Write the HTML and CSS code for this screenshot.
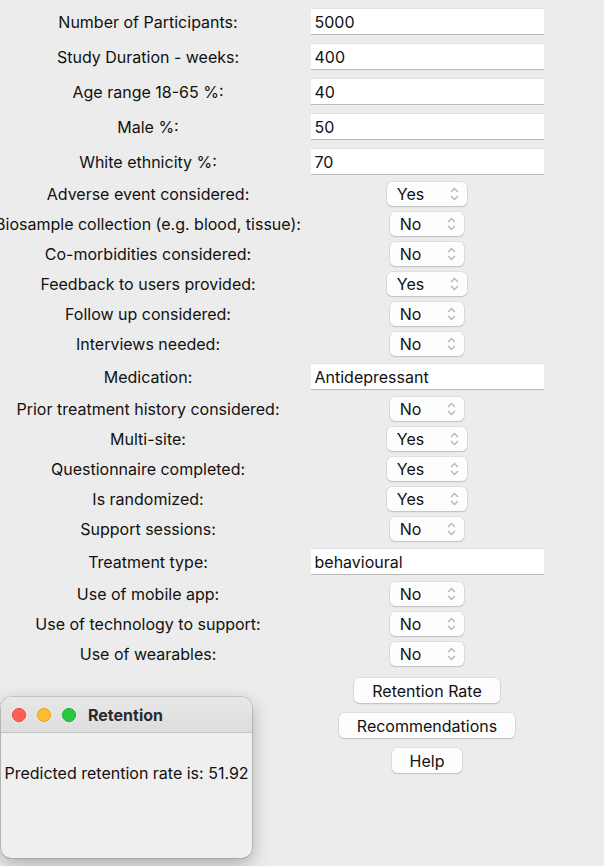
FILE: index.html
```html
<!DOCTYPE html>
<html>
<head>
<meta charset="utf-8">
<link rel="stylesheet" href="styles.css">
</head>
<body>
<div class="form">
  <div class="lbl">Number of Participants:</div>
  <div class="ctl tall"><div class="entry">5000</div></div>
  <div class="lbl">Study Duration - weeks:</div>
  <div class="ctl tall"><div class="entry">400</div></div>
  <div class="lbl">Age range 18-65 %:</div>
  <div class="ctl tall"><div class="entry">40</div></div>
  <div class="lbl">Male %:</div>
  <div class="ctl tall"><div class="entry">50</div></div>
  <div class="lbl">White ethnicity %:</div>
  <div class="ctl tall"><div class="entry">70</div></div>

  <div class="lbl">Adverse event considered:</div>
  <div class="ctl"><div class="select"><span class="val">Yes</span><svg class="arr" width="9" height="14" viewBox="0 0 9 14"><path d="M1 5 L4.5 1.5 L8 5 M1 9 L4.5 12.5 L8 9" fill="none" stroke="#b4b4b4" stroke-width="1.3"/></svg></div></div>
  <div class="lbl">Biosample collection (e.g. blood, tissue):</div>
  <div class="ctl"><div class="select"><span class="val">No</span><svg class="arr" width="9" height="14" viewBox="0 0 9 14"><path d="M1 5 L4.5 1.5 L8 5 M1 9 L4.5 12.5 L8 9" fill="none" stroke="#b4b4b4" stroke-width="1.3"/></svg></div></div>
  <div class="lbl">Co-morbidities considered:</div>
  <div class="ctl"><div class="select"><span class="val">No</span><svg class="arr" width="9" height="14" viewBox="0 0 9 14"><path d="M1 5 L4.5 1.5 L8 5 M1 9 L4.5 12.5 L8 9" fill="none" stroke="#b4b4b4" stroke-width="1.3"/></svg></div></div>
  <div class="lbl">Feedback to users provided:</div>
  <div class="ctl"><div class="select"><span class="val">Yes</span><svg class="arr" width="9" height="14" viewBox="0 0 9 14"><path d="M1 5 L4.5 1.5 L8 5 M1 9 L4.5 12.5 L8 9" fill="none" stroke="#b4b4b4" stroke-width="1.3"/></svg></div></div>
  <div class="lbl">Follow up considered:</div>
  <div class="ctl"><div class="select"><span class="val">No</span><svg class="arr" width="9" height="14" viewBox="0 0 9 14"><path d="M1 5 L4.5 1.5 L8 5 M1 9 L4.5 12.5 L8 9" fill="none" stroke="#b4b4b4" stroke-width="1.3"/></svg></div></div>
  <div class="lbl">Interviews needed:</div>
  <div class="ctl"><div class="select"><span class="val">No</span><svg class="arr" width="9" height="14" viewBox="0 0 9 14"><path d="M1 5 L4.5 1.5 L8 5 M1 9 L4.5 12.5 L8 9" fill="none" stroke="#b4b4b4" stroke-width="1.3"/></svg></div></div>

  <div class="lbl">Medication:</div>
  <div class="ctl tall"><div class="entry">Antidepressant</div></div>

  <div class="lbl">Prior treatment history considered:</div>
  <div class="ctl"><div class="select"><span class="val">No</span><svg class="arr" width="9" height="14" viewBox="0 0 9 14"><path d="M1 5 L4.5 1.5 L8 5 M1 9 L4.5 12.5 L8 9" fill="none" stroke="#b4b4b4" stroke-width="1.3"/></svg></div></div>
  <div class="lbl">Multi-site:</div>
  <div class="ctl"><div class="select"><span class="val">Yes</span><svg class="arr" width="9" height="14" viewBox="0 0 9 14"><path d="M1 5 L4.5 1.5 L8 5 M1 9 L4.5 12.5 L8 9" fill="none" stroke="#b4b4b4" stroke-width="1.3"/></svg></div></div>
  <div class="lbl">Questionnaire completed:</div>
  <div class="ctl"><div class="select"><span class="val">Yes</span><svg class="arr" width="9" height="14" viewBox="0 0 9 14"><path d="M1 5 L4.5 1.5 L8 5 M1 9 L4.5 12.5 L8 9" fill="none" stroke="#b4b4b4" stroke-width="1.3"/></svg></div></div>
  <div class="lbl">Is randomized:</div>
  <div class="ctl"><div class="select"><span class="val">Yes</span><svg class="arr" width="9" height="14" viewBox="0 0 9 14"><path d="M1 5 L4.5 1.5 L8 5 M1 9 L4.5 12.5 L8 9" fill="none" stroke="#b4b4b4" stroke-width="1.3"/></svg></div></div>
  <div class="lbl">Support sessions:</div>
  <div class="ctl"><div class="select"><span class="val">No</span><svg class="arr" width="9" height="14" viewBox="0 0 9 14"><path d="M1 5 L4.5 1.5 L8 5 M1 9 L4.5 12.5 L8 9" fill="none" stroke="#b4b4b4" stroke-width="1.3"/></svg></div></div>

  <div class="lbl">Treatment type:</div>
  <div class="ctl tall"><div class="entry">behavioural</div></div>

  <div class="lbl">Use of mobile app:</div>
  <div class="ctl"><div class="select"><span class="val">No</span><svg class="arr" width="9" height="14" viewBox="0 0 9 14"><path d="M1 5 L4.5 1.5 L8 5 M1 9 L4.5 12.5 L8 9" fill="none" stroke="#b4b4b4" stroke-width="1.3"/></svg></div></div>
  <div class="lbl">Use of technology to support:</div>
  <div class="ctl"><div class="select"><span class="val">No</span><svg class="arr" width="9" height="14" viewBox="0 0 9 14"><path d="M1 5 L4.5 1.5 L8 5 M1 9 L4.5 12.5 L8 9" fill="none" stroke="#b4b4b4" stroke-width="1.3"/></svg></div></div>
  <div class="lbl">Use of wearables:</div>
  <div class="ctl"><div class="select"><span class="val">No</span><svg class="arr" width="9" height="14" viewBox="0 0 9 14"><path d="M1 5 L4.5 1.5 L8 5 M1 9 L4.5 12.5 L8 9" fill="none" stroke="#b4b4b4" stroke-width="1.3"/></svg></div></div>

  <div class="buttons">
    <div class="brow"><div class="btn">Retention Rate</div></div>
    <div class="brow"><div class="btn">Recommendations</div></div>
    <div class="brow"><div class="btn">Help</div></div>
  </div>
</div>

<div class="win">
  <div class="titlebar">
    <span class="light red"></span>
    <span class="light yellow"></span>
    <span class="light green"></span>
    <span class="title">Retention</span>
  </div>
  <div class="winbody">Predicted retention rate is: 51.92</div>
</div>
</body>
</html>
```

FILE: styles.css
```css
html, body {
  margin: 0;
  padding: 0;
  background: #ececec;
  width: 604px;
  height: 866px;
  overflow: hidden;
  font-family: Inter, "Liberation Sans", Arial, sans-serif;
  font-size: 16px;
  color: #111;
}

.form {
  display: grid;
  grid-template-columns: 296px 262px;
  padding-top: 4px;
}

.lbl {
  display: flex;
  justify-content: center;
  align-items: center;
  white-space: nowrap;
  min-width: 0;
}

.ctl {
  display: flex;
  justify-content: center;
  align-items: center;
  height: 30px;
}

.ctl.tall {
  height: 35px;
}

.entry {
  box-sizing: border-box;
  width: 233px;
  height: 27px;
  background: #fff;
  border-top: 1px solid #e2e2e2;
  border-bottom: 1px solid #b9b9b9;
  padding-left: 4px;
  display: flex;
  align-items: center;
  color: #111;
}

.select {
  box-sizing: border-box;
  height: 24px;
  display: inline-flex;
  align-items: center;
  padding: 0 8px 0 10px;
  background: #fdfdfd;
  border-radius: 5px;
  box-shadow: 0 0 0 0.5px rgba(0,0,0,0.12), 0 1px 1.5px rgba(0,0,0,0.14);
}

.select .val {
  margin-right: 26px;
}

.select .arr {
  display: block;
}

.buttons {
  grid-column: 2;
  margin-top: 4px;
  display: flex;
  flex-direction: column;
}

.brow {
  height: 35px;
  display: flex;
  justify-content: center;
  align-items: center;
}

.btn {
  box-sizing: border-box;
  height: 25px;
  padding: 0 18px;
  display: flex;
  align-items: center;
  background: #fdfdfd;
  border-radius: 5px;
  box-shadow: 0 0 0 0.5px rgba(0,0,0,0.12), 0 1px 1.5px rgba(0,0,0,0.14);
  white-space: nowrap;
}

.win {
  position: absolute;
  left: 1px;
  top: 697px;
  width: 251px;
  height: 161px;
  border-radius: 10px;
  background: #efefef;
  box-shadow: 0 0 0 0.5px rgba(0,0,0,0.25), 0 6px 18px rgba(0,0,0,0.28);
  overflow: hidden;
}

.titlebar {
  box-sizing: border-box;
  height: 36px;
  display: flex;
  align-items: center;
  padding-left: 11px;
  background: linear-gradient(#e8e8e8, #dddddd);
  border-bottom: 1px solid #c2c2c2;
}

.light {
  width: 14px;
  height: 14px;
  border-radius: 50%;
  margin-right: 11px;
  box-sizing: border-box;
}

.red { background: #fe5f57; border: 0.5px solid #e2463f; }
.yellow { background: #febc2e; border: 0.5px solid #e1a116; }
.green { background: #28c840; border: 0.5px solid #1aab29; }

.title {
  margin-left: 1px;
  font-weight: 700;
  color: #2b2b2b;
  font-size: 16px;
}

.winbody {
  display: flex;
  justify-content: center;
  white-space: nowrap;
  padding-top: 30px;
  color: #111;
}
```
